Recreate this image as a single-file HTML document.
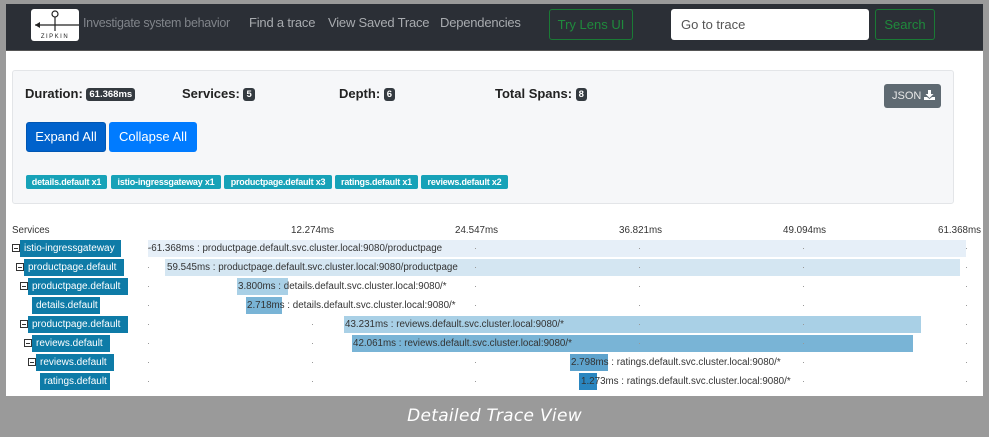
<!DOCTYPE html>
<html><head><meta charset="utf-8"><style>
*{box-sizing:border-box;margin:0;padding:0}
body{width:989px;height:437px;background:#9a9a9a;font-family:"Liberation Sans",sans-serif;position:relative;overflow:hidden}
.main{position:absolute;left:6px;top:4px;width:977px;height:392px;background:#fff}
.nav{position:absolute;left:6px;top:4px;width:977px;height:47px;background:#2b2f36;border-bottom:1px solid #555}
.a{position:absolute;font-size:13px;color:#a8abaf;top:15px;white-space:nowrap;letter-spacing:-0.2px}
.btn-o{position:absolute;border:1px solid #1a7a35;border-radius:3px;color:#1f8a3c;font-size:13px;text-align:center}
.card{position:absolute;left:12px;top:70px;width:942px;height:134px;background:#f6f7f9;border:1px solid #e3e5e8;border-radius:3px}
.lbl{position:absolute;top:86px;font-size:13px;font-weight:bold;color:#222}
.bd{display:inline-block;background:#343a40;color:#fff;font-size:9.5px;padding:1px 3px;border-radius:3px;vertical-align:1px}
.tag{position:absolute;top:175px;height:14px;background:#17a2b8;color:#fff;font-size:9px;font-weight:bold;border-radius:2px;line-height:14px;white-space:nowrap;text-align:center;letter-spacing:-0.2px}
.svc{position:absolute;height:17px;background:#0e7ba7;color:#fff;font-size:10px;line-height:17px;padding-left:4px;white-space:nowrap}
.ic{position:absolute;width:8px;height:8px;border:1px solid #333;background:#fff}
.ic:after{content:"";position:absolute;left:1px;right:1px;top:2.5px;height:1px;background:#333}
.bar{position:absolute;height:17px}
.t{position:absolute;font-size:9.8px;color:#333;white-space:nowrap;line-height:17px}
.dot{position:absolute;width:1px;height:1px;background:#999}
.tk{position:absolute;top:225px;font-size:9.8px;color:#333}
</style></head><body>
<div class="main"></div>
<div class="nav"></div>
<div style="position:absolute;left:31px;top:9px;width:48px;height:32px;background:#fff;border-radius:3px">
<svg width="48" height="32" viewBox="0 0 48 32"><line x1="4" y1="16" x2="48" y2="16" stroke="#222" stroke-width="1.2"/><path d="M4 16l5-3v6z" fill="#222"/><circle cx="24" cy="5" r="3" fill="none" stroke="#222" stroke-width="1.2"/><line x1="24" y1="8" x2="24" y2="22" stroke="#222" stroke-width="1.2"/><text x="24" y="29" font-size="6" text-anchor="middle" font-family="Liberation Sans" letter-spacing="1.5" fill="#222">ZIPKIN</text></svg></div>
<div class="a" style="left:83px;color:#80848a;font-size:12.5px;top:16px;letter-spacing:-0.3px">Investigate system behavior</div>
<div class="a" style="left:249px">Find a trace</div>
<div class="a" style="left:328px">View Saved Trace</div>
<div class="a" style="left:440px">Dependencies</div>
<div class="btn-o" style="left:549px;top:9px;width:84px;height:31px;line-height:29px">Try Lens UI</div>
<div style="position:absolute;left:671px;top:9px;width:198px;height:31px;background:#fff;border-radius:3px;font-size:13px;color:#555;padding:8px 10px">Go to trace</div>
<div class="btn-o" style="left:875px;top:9px;width:60px;height:31px;line-height:29px">Search</div>

<div class="card"></div>
<div class="lbl" style="left:25px">Duration: <span class="bd">61.368ms</span></div>
<div class="lbl" style="left:182px">Services: <span class="bd">5</span></div>
<div class="lbl" style="left:339px">Depth: <span class="bd">6</span></div>
<div class="lbl" style="left:495px">Total Spans: <span class="bd">8</span></div>
<div style="position:absolute;left:884px;top:84px;width:57px;height:24px;background:#5f6a72;border-radius:3px;color:#e8e8e8;font-size:11px;line-height:24px;padding-left:8px">JSON <svg width="11" height="10" viewBox="0 0 11 10" style="vertical-align:-1px"><path d="M4 0h3v4h2.5L5.5 8 1.5 4H4z M0 7h3l2.5 2 2.5-2h3v3H0z" fill="#fff"/></svg></div>
<div style="position:absolute;left:26px;top:122px;width:80px;height:30px;background:#0062cc;border:1px solid #0056b3;border-radius:3px;color:#fff;font-size:13px;line-height:28px;text-align:center">Expand All</div>
<div style="position:absolute;left:109px;top:122px;width:88px;height:30px;background:#007bff;border-radius:3px;color:#fff;font-size:13px;line-height:30px;text-align:center">Collapse All</div>
<div class="tag" style="left:26px;width:81px">details.default x1</div>
<div class="tag" style="left:111px;width:110px">istio-ingressgateway x1</div>
<div class="tag" style="left:224px;width:108px">productpage.default x3</div>
<div class="tag" style="left:335px;width:83px">ratings.default x1</div>
<div class="tag" style="left:421px;width:87px">reviews.default x2</div>

<div class="tk" style="left:12px">Services</div>
<div class="tk" style="left:291px">12.274ms</div>
<div class="tk" style="left:455px">24.547ms</div>
<div class="tk" style="left:619px">36.821ms</div>
<div class="tk" style="left:783px">49.094ms</div>
<div class="tk" style="left:938px">61.368ms</div>

<div class="ic" style="left:12px;top:244px"></div><div class="svc" style="left:20px;top:240px;width:101px">istio-ingressgateway</div>
<div class="ic" style="left:16px;top:263px"></div><div class="svc" style="left:24px;top:259px;width:100px">productpage.default</div>
<div class="ic" style="left:20px;top:282px"></div><div class="svc" style="left:28px;top:278px;width:100px">productpage.default</div>
<div class="svc" style="left:32px;top:297px;width:68px">details.default</div>
<div class="ic" style="left:20px;top:320px"></div><div class="svc" style="left:28px;top:316px;width:100px">productpage.default</div>
<div class="ic" style="left:24px;top:339px"></div><div class="svc" style="left:32px;top:335px;width:78px">reviews.default</div>
<div class="ic" style="left:28px;top:358px"></div><div class="svc" style="left:36px;top:354px;width:78px">reviews.default</div>
<div class="svc" style="left:40px;top:373px;width:70px">ratings.default</div>

<div class="bar" style="left:148px;top:240px;width:818px;background:#e6eff8"></div>
<div class="bar" style="left:165px;top:259px;width:795px;background:#d4e6f2"></div>
<div class="bar" style="left:237px;top:278px;width:51px;background:#a9d0e6"></div>
<div class="bar" style="left:246px;top:297px;width:36px;background:#79b4d6"></div>
<div class="bar" style="left:344px;top:316px;width:577px;background:#a9d0e6"></div>
<div class="bar" style="left:352px;top:335px;width:561px;background:#79b4d6"></div>
<div class="bar" style="left:570px;top:354px;width:38px;background:#5ea3cd"></div>
<div class="bar" style="left:579px;top:373px;width:18px;background:#2a86c0"></div>

<div class="t" style="left:148px;top:240px">-61.368ms : productpage.default.svc.cluster.local:9080/productpage</div>
<div class="t" style="left:167px;top:259px">59.545ms : productpage.default.svc.cluster.local:9080/productpage</div>
<div class="t" style="left:238px;top:278px">3.800ms : details.default.svc.cluster.local:9080/*</div>
<div class="t" style="left:247px;top:297px">2.718ms : details.default.svc.cluster.local:9080/*</div>
<div class="t" style="left:345px;top:316px">43.231ms : reviews.default.svc.cluster.local:9080/*</div>
<div class="t" style="left:353px;top:335px">42.061ms : reviews.default.svc.cluster.local:9080/*</div>
<div class="t" style="left:571px;top:354px">2.798ms : ratings.default.svc.cluster.local:9080/*</div>
<div class="t" style="left:581px;top:373px">1.273ms : ratings.default.svc.cluster.local:9080/*</div>

<div style="position:absolute;left:0;top:396px;width:989px;height:41px;text-align:center;color:#fff;font-style:italic;font-size:17px;line-height:41px;letter-spacing:0.3px;font-family:'DejaVu Sans',sans-serif">Detailed Trace View</div>
<script>
(function(){var ys=[248,267,286,305,324,343,362,381],xs=[148,312,475,639,803,966];var h='';ys.forEach(function(y){xs.forEach(function(x){h+='<div class="dot" style="left:'+x+'px;top:'+y+'px"></div>';});});document.body.insertAdjacentHTML('beforeend',h);})();
</script>
</body></html>
